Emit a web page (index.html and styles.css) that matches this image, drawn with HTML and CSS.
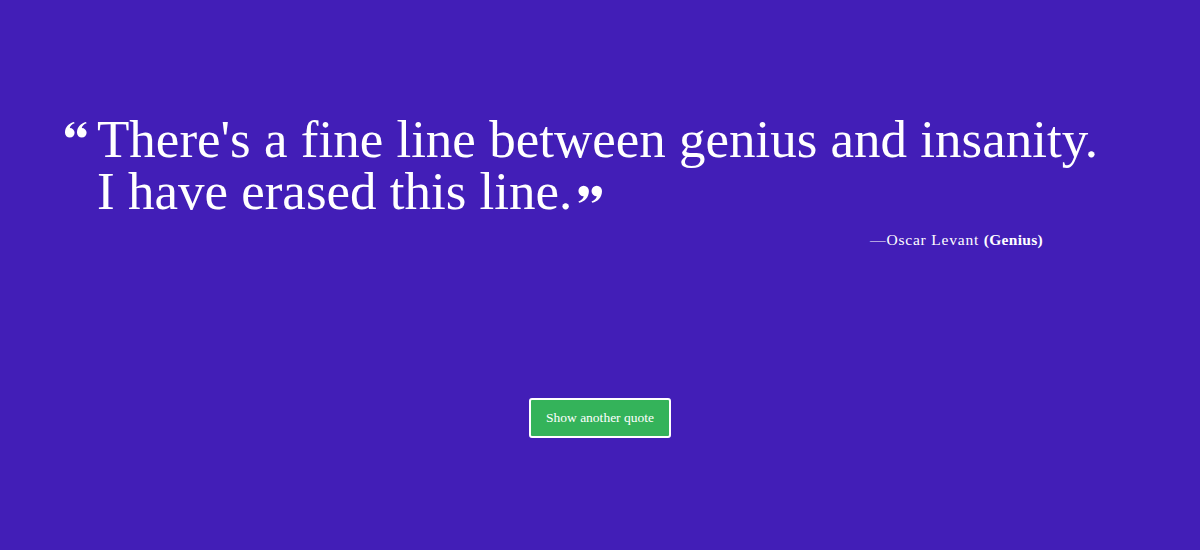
FILE: index.html
```html
<!DOCTYPE html>
<html lang="en">
<head>
<meta charset="utf-8">
<title>Random Quote</title>
<link rel="stylesheet" href="styles.css">
</head>
<body>
<main class="page">
  <section class="quote-box">
    <blockquote class="quote">
      <span class="mark mark-open"><svg viewBox="0 0 22 16" width="22" height="16"><path d="M0 10.8A4.8 4.8 0 1 0 4.8 6C5.2 3.8 6.8 2.2 9.6 1.2L9 0C3.8 1.2 0 5 0 10.8ZM12 10.8A4.8 4.8 0 1 0 16.8 6C17.2 3.8 18.8 2.2 21.6 1.2L21 0C15.8 1.2 12 5 12 10.8Z" fill="#fff"/></svg></span><p class="quote-text">There's a fine line between genius and insanity. I have erased this line.<span class="mark mark-close"><svg viewBox="0 0 22 16" width="24" height="18"><g transform="rotate(180 11 8)"><path d="M0 10.8A4.8 4.8 0 1 0 4.8 6C5.2 3.8 6.8 2.2 9.6 1.2L9 0C3.8 1.2 0 5 0 10.8ZM12 10.8A4.8 4.8 0 1 0 16.8 6C17.2 3.8 18.8 2.2 21.6 1.2L21 0C15.8 1.2 12 5 12 10.8Z" fill="#fff"/></g></svg></span></p>
    </blockquote>
    <p class="author">—Oscar Levant <strong>(Genius)</strong></p>
  </section>
  <div class="actions">
    <button class="btn" type="button">Show another quote</button>
  </div>
</main>
</body>
</html>
```

FILE: styles.css
```css
html, body {
  margin: 0;
  padding: 0;
}
body {
  background: #421eb7;
  color: #fff;
  font-family: "Liberation Serif", "DejaVu Serif", serif;
  width: 1200px;
  height: 550px;
  overflow: hidden;
}
.page {
  display: flex;
  flex-direction: column;
  padding-top: 113px;
}
.quote-box {
  padding-left: 65px;
  display: flex;
  flex-direction: column;
}
.quote {
  margin: 0;
  display: flex;
  align-items: flex-start;
}
.mark-open {
  display: block;
  flex: none;
  margin-top: 9px;
  margin-right: 10px;
  line-height: 0;
}
.quote-text {
  margin: 0;
  flex: none;
  font-size: 53px;
  line-height: 52px;
  width: 1025px;
}
.mark-close {
  display: inline-block;
  margin-left: 6px;
  vertical-align: 6px;
  line-height: 0;
}
.author {
  margin: 14px 0 0;
  width: 978px;
  text-align: right;
  font-size: 15.5px;
  letter-spacing: 0.8px;
}
.author strong {
  font-weight: 700;
  letter-spacing: 0.3px;
}
.actions {
  display: flex;
  justify-content: center;
  margin-top: 149px;
}
.btn {
  width: 142px;
  height: 40px;
  background: #34b35a;
  color: #fff;
  border: 2px solid #fff;
  border-radius: 3px;
  font-family: "Liberation Serif", serif;
  font-size: 13.5px;
}
```
